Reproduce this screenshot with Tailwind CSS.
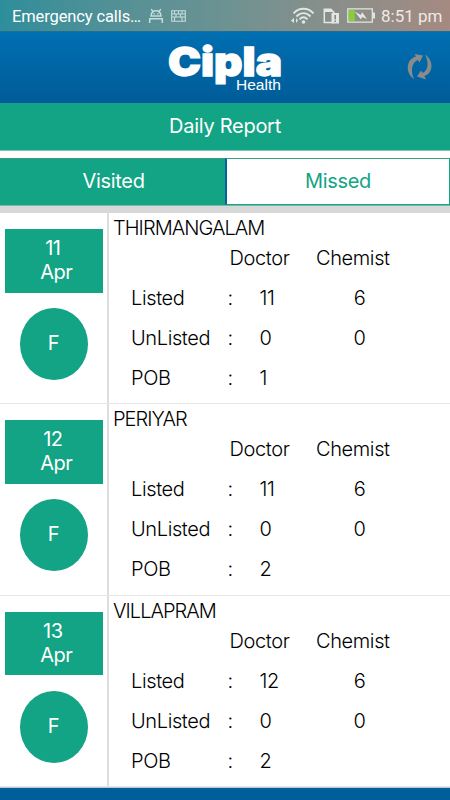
<!DOCTYPE html>
<html lang="en">
<head>
<meta charset="utf-8">
<title>Daily Report</title>
<script src="https://cdn.jsdelivr.net/npm/@tailwindcss/browser@4"></script>
</head>
<body class="w-[450px] h-[800px] overflow-hidden bg-white flex flex-col font-['Inter',sans-serif] font-light text-[20px] text-black">
  <div class="h-[31px] shrink-0 flex items-center bg-linear-to-r from-[#2d8e9b] via-[#6c9292] to-[#a48a81] font-['Roboto',sans-serif] font-normal pl-3 pr-2">
    <span class="text-[16.5px] text-white w-[129px] whitespace-nowrap mt-[3px] -tracking-[0.12px]">Emergency calls…</span>
    <svg class="ml-[7px] w-4 h-4" viewBox="0 0 16 16" fill="none" stroke="#c5dddd" stroke-width="1.5"><path d="M3 8C3.300 4.500 5 2.800 8 2.800S12.700 4.500 13 8zM4.700 3.500 3.300 1M11.300 3.500 12.700 1M1.700 15V10.700H14.300V15"/><path d="M5.500 5.800h1.200M9.300 5.800h1.200"/></svg>
    <svg class="ml-[7px] w-[15px] h-3" viewBox="0 0 15 12" fill="none" stroke="#c5dddd" stroke-width="1.100"><path d="M.7.7h13.600v10.600H.7zM1 4h13M1 7h13M3.500 1v3M7.500 1v3M11 1v3M5 4v3M9.500 4v3M3.500 7v4M11 7v4"/></svg>
    <svg class="ml-auto w-[24px] h-[18px]" viewBox="0 0 24 18"><g fill="none" stroke="#e2e6e2" stroke-width="1.900"><path d="M2.500 6.500C8 .2 17 .2 22.500 6.500M5.500 9.500c4-4.500 10-4.500 14 0M8.500 12.300c2.500-2.700 5.500-2.700 8 0"/></g><circle cx="12.500" cy="15" r="1.800" fill="#e2e6e2"/><path d="M0 13.500 3 11v5zM5 11l2 2.500L5 16z" fill="#e2e6e2"/></svg>
    <svg class="ml-[8px] w-4 h-4" viewBox="0 0 16 16"><path d="M1.300 1.200h6.500l3 3V14.500H1.300z" fill="none" stroke="#e2e6e2" stroke-width="1.500"/><path d="M1 1h7l3 3H1z" fill="#e2e6e2"/><path d="M8.500 5H16v10.500H8.500z" fill="#e2e6e2"/><path d="M12.200 7v4.500M12.200 12.500v1.500" stroke="#87837e" stroke-width="1.500"/></svg>
    <svg class="ml-[8px] w-[28px] h-[15px]" viewBox="0 0 28 15"><path d="M.8.8h24.500v13.400H.8z" fill="none" stroke="#e2e6e2" stroke-width="1.300"/><path d="M26 4.500h2v6h-2z" fill="#e2e6e2"/><path d="M2 2h5.500l.5 11H2z" fill="#86cf36"/><path d="m7.500 3.500 6.500 3.500 1-3 5 7-5-2-1 2.500z" fill="#e2e6e2"/></svg>
    <span class="ml-[6px] w-[61px] text-[17px] text-[#eeeae6] whitespace-nowrap mt-[3px]">8:51 pm</span>
  </div>
  <header class="h-[72px] shrink-0 relative bg-linear-to-b from-[#006fb1] to-[#005c98] border-t border-[#256c93]">
    <svg class="absolute left-0 top-[-1px] w-[450px] h-[72px]" viewBox="0 31 450 72" fill="#fff">
      <text x="168" y="75.500" font-family="Inter" font-weight="900" font-size="40" textLength="114" lengthAdjust="spacingAndGlyphs" stroke="#fff" stroke-width="1.300">Cipla</text>
      <g fill="#8b8b8b"><path d="M414 79C405 73 406 59 416 56.500L414.500 54 423 55.500 419.500 62.500 417.800 60C411.500 62.500 410.500 71 414 79Z"/><path d="M425 54.500C434 60.500 433.500 73 424.500 76L426 79.500 417 76.500 421 70.500 422.700 73C428.500 70.500 429 62 425 54.500Z"/></g>
    </svg>
    <span class="absolute left-[236px] top-[45px] font-['Liberation_Sans',sans-serif] font-normal text-[15.500px] leading-4 text-white">Health</span>
  </header>
  <div class="h-[48px] shrink-0 bg-[#12a484] border-b border-[#7fc7b4] text-white text-center leading-[46px] font-normal"><span class="inline-block -tracking-[0.27px]">Daily Report</span></div>
  <div class="mt-[7px] h-[48px] shrink-0 flex text-center leading-[45px] -tracking-[0.3px] border-b border-[#7db8a4]">
    <div class="w-[225px] bg-[#12a484] border-t border-[#3a9c80] text-white font-normal pl-[2px]">Visited</div>
    <div class="grow border-t border-l-2 border-r border-t-[#3a9c80] border-l-[#08629c] border-r-[#12a484] border-b border-b-[#12a484] text-[#12a484] font-normal">Missed</div>
  </div>
  <div class="h-[7px] shrink-0 bg-[#d8d8d8]"></div>
  <main id="list" class="flex flex-col shrink-0"></main>
  <footer class="grow bg-[#005f9b] border-t border-[#b8cbd8]"></footer>
<script>
const days = [["11","THIRMANGALAM","11","1"],["12","PERIYAR","11","2"],["13","VILLAPRAM","12","2"]];
const row = (l,a,b) => `<div class="grid grid-cols-[96.5px_32px_75px_50px] h-10 leading-[40.500px]"><span>${l}</span><span>:</span><span>${a}</span><span class="text-center">${b}</span></div>`;
document.getElementById('list').innerHTML = days.map(([d,name,n,p]) => `
<section class="h-[191.3px] flex border-b border-[#e6e6e6]">
  <div class="w-[109px] shrink-0 border-r-2 border-[#dedede] pl-[4.500px] pt-4">
    <div class="w-[98.500px] h-[63.500px] bg-[#12a484] text-white font-normal text-center leading-6 pt-[7px] -tracking-[0.6px]"><div class="pr-[2px]">${d}</div><div class="pl-[5px]">Apr</div></div>
    <div class="ml-[15.500px] mt-[15.500px] w-[67.500px] h-[72px] rounded-[50%] bg-[#12a484] text-white font-normal text-center leading-[71px]">F</div>
  </div>
  <div class="grow">
    <div class="h-[25px] leading-[30px] pl-[4px] -tracking-[0.95px]">${name}</div>
    <div class="pl-[22px] -tracking-[0.38px]">
      <div class="flex h-10 leading-[41px] pl-[98.500px]"><span class="w-[86.500px]">Doctor</span><span>Chemist</span></div>
      ${row("Listed",n,"6")}${row("UnListed","0","0")}${row("POB",p,"")}
    </div>
  </div>
</section>`).join('');
</script>
</body>
</html>
